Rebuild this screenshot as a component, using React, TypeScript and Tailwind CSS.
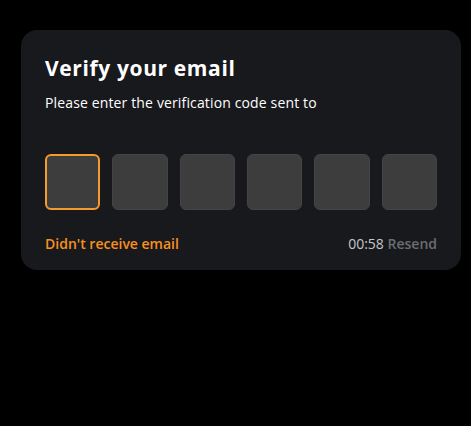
export default function App() {
  const digits = ['', '', '', '', '', ''];

  return (
    <div
      className="min-h-screen bg-black pt-[30px] pl-[21px] pr-[10px]"
      style={{ fontFamily: '"Open Sans", "Noto Sans CJK KR", sans-serif' }}
    >
      <div className="w-[440px] rounded-2xl bg-[#18191c] px-6 pt-6 pb-4">
        <h1 className="text-[21px] leading-7 font-bold tracking-[0.03em] text-white">Verify your email</h1>
        <p className="mt-[11px] text-sm leading-5 tracking-[0.01em] text-white">
          Please enter the verification code sent to
        </p>

        <div className="mt-[41px] grid grid-cols-6 gap-3">
          {digits.map((d, i) => (
            <div
              key={i}
              className={`h-[56px] rounded-md bg-[#3d3d3d] ${
                i === 0 ? 'border-2 border-[#f79a2c]' : 'border border-[#444446]'
              }`}
            >
              {d}
            </div>
          ))}
        </div>

        <div className="mt-6 flex items-center justify-between text-sm leading-5">
          <span className="font-semibold text-[#f7901e]">Didn't receive email</span>
          <span>
            <span className="text-[#c5c8cc]">00:58</span>{' '}
            <span className="font-semibold text-[#6b6d70]">Resend</span>
          </span>
        </div>
      </div>
    </div>
  );
}
